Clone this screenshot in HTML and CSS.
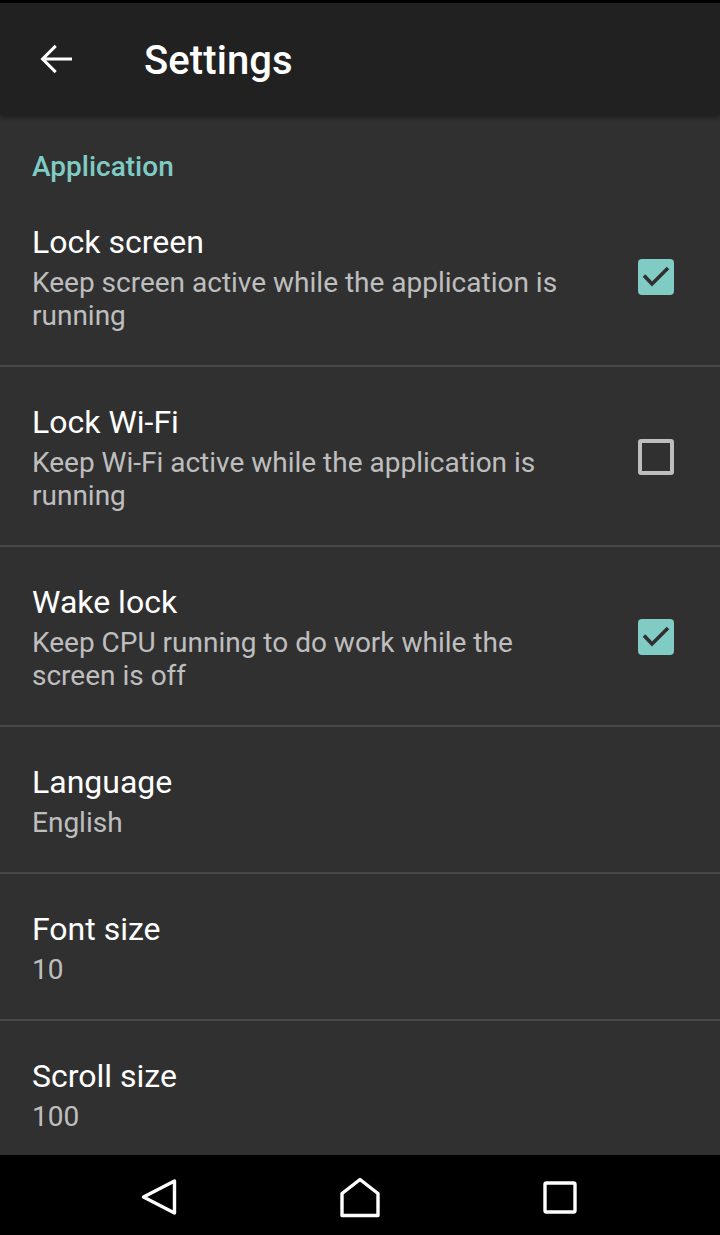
FILE: index.html
```html
<!DOCTYPE html>
<html>
<head>
<meta charset="utf-8">
<link rel="stylesheet" href="styles.css">
</head>
<body>
<div class="screen">
  <div class="statusbar"></div>
  <header class="toolbar">
    <svg class="back" viewBox="0 0 24 24" width="48" height="48"><path fill="#fff" d="M20 11.25H7.1l5.3-5.3-1.06-1.06L4.23 12l7.1 7.1 1.06-1.06-5.3-5.3H20z"/></svg>
    <h1 class="title">Settings</h1>
  </header>
  <main class="list">
    <div class="category">Application</div>
    <div class="item">
      <div class="text">
        <div class="label">Lock screen</div>
        <div class="summary">Keep screen active while the application is running</div>
      </div>
      <div class="check on"><svg viewBox="0 0 36 36" width="36" height="36"><path d="M6 16.5l8 8.5 16-16" fill="none" stroke="#303030" stroke-width="3.6"/></svg></div>
    </div>
    <div class="item">
      <div class="text">
        <div class="label">Lock Wi-Fi</div>
        <div class="summary">Keep Wi-Fi active while the application is running</div>
      </div>
      <div class="check off"></div>
    </div>
    <div class="item">
      <div class="text">
        <div class="label">Wake lock</div>
        <div class="summary">Keep CPU running to do work while the screen is off</div>
      </div>
      <div class="check on"><svg viewBox="0 0 36 36" width="36" height="36"><path d="M6 16.5l8 8.5 16-16" fill="none" stroke="#303030" stroke-width="3.6"/></svg></div>
    </div>
    <div class="item">
      <div class="text">
        <div class="label">Language</div>
        <div class="summary">English</div>
      </div>
    </div>
    <div class="item">
      <div class="text">
        <div class="label">Font size</div>
        <div class="summary">10</div>
      </div>
    </div>
    <div class="item last">
      <div class="text">
        <div class="label">Scroll size</div>
        <div class="summary">100</div>
      </div>
    </div>
  </main>
  <nav class="navbar">
    <svg class="nav-icon" viewBox="0 0 40 40" width="40" height="40"><path d="M3.5 19L34.5 3v32z" fill="none" stroke="#fff" stroke-width="3.4" stroke-linejoin="round"/></svg>
    <svg class="nav-icon" viewBox="0 0 40 40" width="40" height="40"><path d="M20 1.5L38 15.5V37.5H2V15.5z" fill="none" stroke="#fff" stroke-width="3.4" stroke-linejoin="round"/></svg>
    <svg class="nav-icon" viewBox="0 0 40 40" width="40" height="40"><rect x="5" y="5" width="30" height="29" rx="1.5" fill="none" stroke="#fff" stroke-width="3.4"/></svg>
  </nav>
</div>
</body>
</html>
```
FILE: styles.css
```css
* { box-sizing: border-box; }
html, body { margin: 0; padding: 0; }
body {
  background: #303030;
  font-family: Roboto, "Liberation Sans", sans-serif;
}
.screen {
  width: 720px;
  height: 1235px;
  display: flex;
  flex-direction: column;
  overflow: hidden;
  background: #303030;
}
.statusbar {
  height: 3px;
  background: #000;
  flex: none;
}
.toolbar {
  flex: none;
  height: 112px;
  background: #212121;
  display: flex;
  align-items: center;
  padding-left: 32px;
  box-shadow: 0 2px 5px rgba(0,0,0,0.45);
  position: relative;
  z-index: 1;
}
.back { display: block; flex: none; }
.title {
  margin: 4px 0 0 64px;
  color: #fff;
  font-size: 40px;
  font-weight: 500;
  line-height: 48px;
  letter-spacing: 0.1px;
}
.list {
  flex: 1;
  overflow: hidden;
}
.category {
  padding: 36px 32px 4px;
  height: 72px;
  color: #80cbc4;
  font-size: 28px;
  font-weight: 500;
  line-height: 32px;
}
.item {
  display: flex;
  align-items: center;
  padding: 35px 0 33px 32px;
  border-bottom: 2px solid #484848;
}
.item.last { border-bottom: none; }
.text {
  flex: 1;
  min-width: 0;
  padding-right: 10px;
}
.label {
  color: #fff;
  font-size: 32px;
  line-height: 40px;
  margin-bottom: 4px;
}
.summary {
  color: rgba(255,255,255,0.7);
  font-size: 28px;
  line-height: 33px;
  max-width: 560px;
}
.check {
  flex: none;
  width: 36px;
  height: 36px;
  margin: 0 46px 0 22px;
  border-radius: 4px;
}
.check svg { display: block; }
.check.on { background: #80cbc4; }
.check.off { border: 4px solid #bdbdbd; border-radius: 3px; }
.navbar {
  flex: none;
  height: 80px;
  background: #000;
  display: flex;
  align-items: center;
  justify-content: space-between;
  padding: 6px 140px 0;
}
.nav-icon { display: block; }
```
